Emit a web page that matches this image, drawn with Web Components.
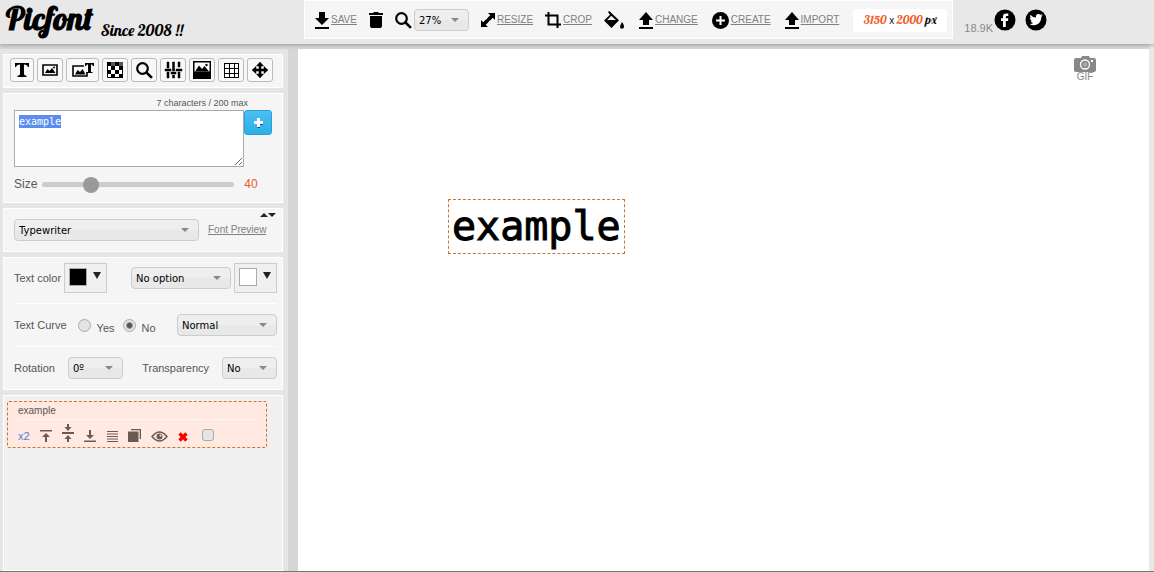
<!DOCTYPE html>
<html lang="en">
<head>
<meta charset="utf-8">
<title>Picfont</title>
<style>
  :root {
    --font-ui: "Liberation Sans", Arial, sans-serif;
    --font-control: "DejaVu Sans", Verdana, sans-serif;
    --font-mono: "DejaVu Sans Mono", monospace;
    --font-script: Lobster, "Liberation Serif", serif;
    --color-text: #555;
    --color-link: #808080;
    --color-accent: #ee5a24;
    --color-dash: #cf7430;
  }

  body {
    margin: 0;
    font: 11px/16px var(--font-ui);
    color: var(--color-text);
  }
</style>
</head>
<body>
<picfont-app></picfont-app>

<script>
const arrowUp = '<path d="M7 0l7 8H10v5H4V8H0z"/><path d="M0 15h14v2H0z"/>';

// [width, height, markup]
const ICONS = {
  save: [14, 17, '<path d="M4 0h6v6h4L7 13 0 6h4z"/><path d="M0 15h14v2H0z"/>'],
  upload: [14, 17, arrowUp],
  trash: [14, 16, '<path d="M0 1h4l1-1h4l1 1h4v2H0zM1 4h12v10q0 2-2 2H3q-2 0-2-2z"/>'],
  search: [16, 16, '<circle cx="6.5" cy="6.5" r="5.3" fill="none" stroke="currentColor" stroke-width="2.2"/><path d="M10 11l1-1 5 5-1 1z" stroke="currentColor" stroke-width="1.2"/>'],
  resize: [14, 14, '<path d="M7 0h7v7l-2.3-2.3L9 7.5 6.5 5l2.800-2.700zM7 14H0V7l2.300 2.300L5 6.500 7.500 9 4.700 11.700z"/><path d="M3.500 8.200L8.200 3.500 10.500 5.800 5.800 10.500z"/>'],
  crop: [16, 16, '<path d="M3.500 0v12.500H16M0 3.500h12.500V16" fill="none" stroke="currentColor" stroke-width="2"/>'],
  bucket: [20, 18, '<path d="M4 1l1.300-1L15 9.300 7.500 17 0 9.500l6-5.700z"/><path d="M7 5.200L3.200 9h8.600L7.500 5z" fill="#f5f5f5"/><path d="M18 11q2.400 3.500 2 4.800a2 2 0 0 1-4 0Q16 14.500 18 11z"/>'],
  create: [17, 17, '<circle cx="8.500" cy="8.500" r="8.500"/><path d="M8.500 4v9M4 8.500h9" stroke="#fff" stroke-width="2"/>'],
  facebook: [22, 22, '<circle cx="11" cy="11" r="10.500"/><path d="M9 18v-6H7V9.300h2V7.500Q9 4.500 12 4.500h2.300v2.600h-1.500q-1 0-1 1v1.200h2.500L14 12h-2.200v6z" fill="#fff"/>'],
  twitter: [22, 22, '<circle cx="11" cy="11" r="10.500"/><path d="M4.500 15q2.400.1 3.800-1.100-2-.2-2.600-2h1.200Q4.900 11.200 4.900 9l1.200.3Q4.300 7.700 5.400 5.700q2.200 2.700 5.500 2.900-.5-2.700 1.700-3.500 1.700-.4 2.800.7l1.900-.7-1.100 1.600 1.600-.4-1.500 1.600q.1 4.500-3.500 7.100-4.200 2.500-8.300 0z" fill="#fff"/>'],
  type: [14, 14, '<path d="M0 0h14v4h-1Q12.500 1.500 9 1.500V11q0 1.700 2.500 1.700V14h-9v-1.300Q5 12.700 5 11V1.500Q1.500 1.500 1 4H0z"/>'],
  picture: [16, 12, '<path d="M1 1h14v10H1z" fill="none" stroke="currentColor" stroke-width="1.600"/><path d="M3 9l2.500-4 2 2L10 4l3.500 5z"/><circle cx="12" cy="3.500" r="1"/>'],
  pictureType: [22, 14, '<path d="M12 3H1v10h14V9" fill="none" stroke="currentColor" stroke-width="1.600"/><path d="M3 11.500L5.500 7 8 9l2.500-3 3 5.500zM13 0h9v3h-1l-1-1.500h-1V9h1.500v1h-6V9H16V1.500h-1L14 3h-1z"/>'],
  checker: [16, 16, '<path d="M.5.5h15v15H.5z" fill="#fff" stroke="currentColor"/><path d="M0 0h4v4H0zM8 0h4v4H8zM4 4h4v4H4zM12 4h4v4h-4zM0 8h4v4H0zM8 8h4v4H8zM4 12h4v4H4zM12 12h4v4h-4z"/><path d="M4 0h4v4H4zM12 0h4v4h-4z" fill="#555"/>'],
  sliders: [17, 16, '<path d="M2 0h2v6H2zM2 10h2v6H2zM0 7h6v2H0zM7.500 0h2v9h-2zM7.500 13h2v3h-2zM6 10h5v2H6zM13 0h2v5h-2zM13 10h2v6h-2zM11 7h6v2h-6z" stroke="currentColor" stroke-width=".5"/>'],
  fill: [18, 18, '<path d="M0 0h18v18H0z"/><path d="M1.500 1.500h15v9h-15z" fill="#fff"/><path d="M2 10.500L6 4.500 9 8l2.500-3 4.500 5.500z"/><circle cx="13.500" cy="4" r="1.200"/>'],
  grid: [15, 15, '<path d="M0 0h4v4H0zM5.500 0h4v4h-4zM11 0h4v4h-4zM0 5.500h4v4H0zM5.500 5.500h4v4h-4zM11 5.500h4v4h-4zM0 11h4v4H0zM5.500 11h4v4h-4zM11 11h4v4h-4z" fill="#fff"/><path d="M.5 0v15M5.500 0v15M10.500 0v15M14.500 0v15M0 .5h15M0 5.500h15M0 10.500h15M0 14.500h15" stroke="currentColor"/>'],
  move: [16, 16, '<path d="M8 0l3.500 4H9v3h3V4.500L16 8l-4 3.500V9H9v3h2.500L8 16l-3.500-4H7V9H4v2.500L0 8l4-3.500V7h3V4H4.500z" stroke="currentColor" stroke-width=".5"/>'],
  caret: [8, 4, '<path d="M0 0h8L4 4z" fill="#888"/>'],
  caretDark: [8, 7, '<path d="M0 0h8L4 7z" fill="#222"/>'],
  sort: [16, 4, '<path d="M0 4l4-4 4 4zM8 0h8l-4 4z" fill="#222"/>'],
  plus: [9, 9, '<path d="M3 0h3v3h3v3H6v3H3V6H0V3h3z" fill="#fff"/><path d="M6 6.400h3M3.500 9.500H6" stroke="#226" stroke-width=".8"/>'],
  camera: [22, 16, '<path d="M2 2h5l1-2h7l1 2h4q2 0 2 2v10q0 2-2 2H2q-2 0-2-2V4q0-2 2-2z"/><circle cx="11" cy="8.500" r="4.500" fill="none" stroke="#fff" stroke-width="1.300"/><circle cx="11" cy="8.500" r="2.300" fill="#aaa"/><path d="M17 4h2v2h-2z" fill="#fff"/>'],
  toTop: [12, 12, '<path d="M0 0h12v1.500H0zM6 3l4 4H7v5H5V7H2z"/>'],
  toMiddle: [12, 18, '<path d="M5 0h2v3h2.500L6 7 2.500 3H5zM0 8h12v2H0zM6 11l3.500 4H7v3H5v-3H2.500z"/>'],
  toBottom: [12, 12, '<path d="M5 0h2v5h3L6 9 2 5h3zM0 10.500h12V12H0z"/>'],
  lines: [12, 11, '<path d="M1 .5h11M1 3h11M1 5.500h11M1 8h11M1 10.500h11" stroke="currentColor" stroke-width="1"/>'],
  copies: [13, 13, '<path d="M3 0h10v10h-1.300V1.300H3zM0 2.500h10.500V13H0z"/>'],
  eye: [17, 11, '<path d="M1 5.500Q8.500-3.500 16 5.500 8.500 14.500 1 5.500z" fill="none" stroke="currentColor" stroke-width="1.500"/><circle cx="8.500" cy="5.500" r="3"/><circle cx="9.500" cy="4.500" r="1" fill="#ffe9e0"/>'],
  remove: [10, 10, '<path d="M1.500 1.500l7 7M8.500 1.500l-7 7" stroke="#f00" stroke-width="3.200"/>']
};

/** <ui-icon name> - inline drawing taken from ICONS */
class UiIcon extends HTMLElement {
  connectedCallback() {
    const [w, h, markup] = ICONS[this.getAttribute('name')];
    this.attachShadow({ mode: 'open' }).innerHTML = `
      <style>
        :host { display: block; flex: none; }
        svg { display: block; overflow: visible; }
      </style>
      <svg width="${w}" height="${h}" viewBox="0 0 ${w} ${h}" fill="currentColor" aria-hidden="true">${markup}</svg>
    `;
  }
}

/** <ui-select value label> - drop-down; its width comes from the host */
class UiSelect extends HTMLElement {
  connectedCallback() {
    this.attachShadow({ mode: 'open' }).innerHTML = `
      <style>
        :host { display: grid; flex: none; align-items: center; color: #000; }
        select, ui-icon { grid-area: 1 / 1; }
        select {
          appearance: none;
          width: 100%;
          height: 22px;
          margin: 0;
          padding: 1px 16px 0 4px;
          border: 1px solid #ccc;
          border-radius: 4px;
          background: linear-gradient(#eee 50%, #e8e8e8 50%);
          font: 10px/16px var(--font-control);
          color: inherit;
        }
        ui-icon { justify-self: end; margin-right: 10px; pointer-events: none; }
      </style>
      <select aria-label="${this.getAttribute('label')}">
        <option>${this.getAttribute('value')}</option>
      </select>
      <ui-icon name="caret"></ui-icon>
    `;
  }
}

/** <ui-panel> - light box with a white edge */
class UiPanel extends HTMLElement {
  connectedCallback() {
    this.attachShadow({ mode: 'open' }).innerHTML = `
      <style>
        :host {
          display: block;
          box-sizing: border-box;
          border: 1px solid #fff;
          background: #f5f5f5;
        }
      </style>
      <slot></slot>
    `;
  }
}

/** <tool-link icon> - icon followed by an underlined caption */
class ToolLink extends HTMLElement {
  connectedCallback() {
    this.attachShadow({ mode: 'open' }).innerHTML = `
      <style>
        :host { display: block; flex: none; }
        a {
          display: flex;
          align-items: center;
          gap: 2px;
          color: var(--color-link);
          font-size: 10px;
          line-height: 16px;
        }
        ui-icon { color: #000; }
      </style>
      <a href="#"><ui-icon name="${this.getAttribute('icon')}"></ui-icon><slot></slot></a>
    `;
  }
}

/** <color-picker color label> */
class ColorPicker extends HTMLElement {
  connectedCallback() {
    this.attachShadow({ mode: 'open' }).innerHTML = `
      <style>
        :host { display: block; flex: none; }
        button {
          display: flex;
          gap: 6px;
          box-sizing: border-box;
          width: 43px;
          height: 30px;
          padding: 4px;
          border: 1px solid #ccc;
          background: #f0f0f0;
        }
        i {
          box-sizing: border-box;
          width: 18px;
          height: 18px;
          border: 1px solid #aaa;
          background: ${this.getAttribute('color')};
        }
        ui-icon { margin-top: 4px; }
      </style>
      <button aria-label="${this.getAttribute('label')}"><i></i><ui-icon name="caretDark"></ui-icon></button>
    `;
  }
}

class AppHeader extends HTMLElement {
  connectedCallback() {
    this.attachShadow({ mode: 'open' }).innerHTML = `
      <style>
        :host {
          display: grid;
          grid-template-columns: 304px auto 1fr;
          align-items: start;
          height: 44px;
          background: #e8e8e8;
          box-shadow: 0 1px 4px #999;
          position: relative;
        }
        .brand {
          display: flex;
          gap: 8px;
          align-items: flex-start;
          padding-left: 6px;
          color: #000;
          font-family: var(--font-script);
        }
        h1 { margin: 0; font-size: 32px; line-height: 36px; }
        .brand p { margin: 20px 0 0; font-size: 16px; line-height: 20px; }
        nav, .group { display: flex; align-items: center; gap: 12px; }
        nav { gap: 15px; height: 22px; padding: 8px 5px 7px 10px; }
        .group.wide { gap: 14px; }
        .zoom { display: flex; align-items: center; gap: 3px; color: #000; }
        button { padding: 0; border: 0; background: none; color: #000; }
        .zoom ui-select { width: 55px; }
        .size {
          box-sizing: border-box;
          width: 94px;
          background: #fff;
          color: #111;
          text-align: center;
          font: 12px/22px var(--font-script);
        }
        .size b { color: var(--color-accent); font-weight: normal; }
        .size span { font: 10px/22px var(--font-ui); }
        .social { display: flex; gap: 9px; padding: 9px 0 0 11px; }
        .social a { color: #000; }
        .likes { display: flex; gap: 1px; color: #888; }
        .likes span { padding-top: 11px; }
      </style>
      <div class="brand"><h1>Picfont</h1><p>Since 2008 !!</p></div>
      <ui-panel>
        <nav>
          <div class="group">
            <tool-link icon="save">SAVE</tool-link>
            <button aria-label="Delete"><ui-icon name="trash"></ui-icon></button>
            <div class="zoom">
              <ui-icon name="search"></ui-icon>
              <ui-select label="Zoom" value="27%"></ui-select>
            </div>
            <tool-link icon="resize">RESIZE</tool-link>
            <tool-link icon="crop">CROP</tool-link>
            <button aria-label="Fill"><ui-icon name="bucket"></ui-icon></button>
          </div>
          <div class="group wide">
            <tool-link icon="upload">CHANGE</tool-link>
            <tool-link icon="create">CREATE</tool-link>
            <tool-link icon="upload">IMPORT</tool-link>
            <div class="size"><b>3150</b> <span>x</span> <b>2000</b> px</div>
          </div>
        </nav>
      </ui-panel>
      <div class="social">
        <div class="likes"><span>18.9K</span><a href="#" aria-label="Facebook"><ui-icon name="facebook"></ui-icon></a></div>
        <a href="#" aria-label="Twitter"><ui-icon name="twitter"></ui-icon></a>
      </div>
    `;
  }
}

/** <mode-bar> - row of square tool buttons */
class ModeBar extends HTMLElement {
  connectedCallback() {
    const modes = ['type', 'picture', 'pictureType', 'checker', 'search', 'sliders', 'fill', 'grid', 'move'];
    this.attachShadow({ mode: 'open' }).innerHTML = `
      <style>
        :host { display: flex; gap: 3px; padding: 3px 6px 5px; }
        button {
          display: grid;
          place-items: center;
          box-sizing: border-box;
          flex: 0 0 26px;
          height: 24px;
          padding: 0;
          border: 1px solid #bbb;
          border-radius: 3px;
          background: #f8f8f8;
          color: #000;
        }
        button:first-of-type { flex-basis: 24px; }
        button:nth-of-type(3) { flex-basis: 33px; }
      </style>
      ${modes.map(m => `<button aria-label="${m}"><ui-icon name="${m}"></ui-icon></button>`).join('')}
    `;
  }
}

class TextEditor extends HTMLElement {
  connectedCallback() {
    this.attachShadow({ mode: 'open' }).innerHTML = `
      <style>
        :host {
          display: grid;
          grid-template-columns: 230px 28px;
          padding: 2px 10px 10px;
        }
        .count {
          grid-column: 1 / 3;
          padding-right: 24px;
          text-align: right;
          font-size: 9px;
          line-height: 14px;
        }
        textarea {
          box-sizing: border-box;
          height: 57px;
          margin: 0;
          padding: 4px;
          border: 1px solid #aaa;
          outline: 0;
          background: #fff;
          color: #222;
          font: 10px/13px var(--font-mono);
        }
        textarea::selection { background: #5b8def; color: #fff; }
        button {
          display: grid;
          place-items: center;
          width: 28px;
          height: 25px;
          padding: 0;
          border: 1px solid #2a9fd6;
          border-radius: 3px;
          background: linear-gradient(#4ac0f2, #2bb0e8);
        }
        .size {
          grid-column: 1 / 3;
          display: flex;
          align-items: center;
          gap: 5px;
          padding-top: 9px;
          font-size: 12px;
          line-height: 16px;
        }
        input {
          appearance: none;
          width: 192px;
          height: 16px;
          margin: 0;
          background: none;
        }
        input::-webkit-slider-runnable-track {
          height: 5px;
          border-radius: 3px;
          background: #ccc;
        }
        input::-webkit-slider-thumb {
          appearance: none;
          width: 16px;
          height: 16px;
          margin-top: -5px;
          border-radius: 50%;
          background: #999;
        }
        output { margin-left: 5px; color: var(--color-accent); }
      </style>
      <label class="count" for="text">7 characters / 200 max</label>
      <textarea id="text" maxlength="200" spellcheck="false">example</textarea>
      <button aria-label="Add text"><ui-icon name="plus"></ui-icon></button>
      <div class="size">
        <label for="size">Size</label>
        <input id="size" type="range" min="10" max="140" value="40">
        <output for="size">40</output>
      </div>
    `;
    const area = this.shadowRoot.querySelector('textarea');
    area.focus();
    area.select();
  }
}

class FontPicker extends HTMLElement {
  connectedCallback() {
    this.attachShadow({ mode: 'open' }).innerHTML = `
      <style>
        :host {
          display: grid;
          grid-template-columns: 185px 1fr;
          gap: 2px 9px;
          align-items: center;
          padding: 4px 6px 10px 10px;
        }
        ui-icon { grid-column: 1 / 3; justify-self: end; }
        a { color: var(--color-link); font-size: 10px; }
      </style>
      <ui-icon name="sort"></ui-icon>
      <ui-select label="Font" value="Typewriter"></ui-select>
      <a href="#">Font Preview</a>
    `;
  }
}

class TextOptions extends HTMLElement {
  connectedCallback() {
    this.attachShadow({ mode: 'open' }).innerHTML = `
      <style>
        :host { display: block; padding: 0 5px 0 10px; }
        .row {
          display: flex;
          align-items: center;
          height: 42px;
        }
        .row + .row { border-top: 1px solid #fff; }
        .row.colors { height: 30px; padding: 5px 0 10px; gap: 3px; }
        .push { margin-left: auto; }
        .wide { width: 100px; }
        .narrow { width: 55px; }
        .rotation { gap: 13px; }
        fieldset {
          display: flex;
          align-items: center;
          margin: 0 0 0 11px;
          padding: 0;
          border: 0;
          gap: 8px;
        }
        fieldset label { display: flex; align-items: center; gap: 6px; }
        fieldset span { padding-top: 6px; }
        input {
          appearance: none;
          box-sizing: border-box;
          width: 13px;
          height: 13px;
          margin: 0;
          border: 1px solid #aaa;
          border-radius: 50%;
          background: #e4e4e4;
        }
        input:checked { background: radial-gradient(#555 2px, #e4e4e4 4px); }
      </style>
      <div class="row colors">
        <span>Text color</span>
        <color-picker color="#000" label="Text color"></color-picker>
        <ui-select class="wide push" label="Effect" value="No option"></ui-select>
        <color-picker color="#fff" label="Effect color"></color-picker>
      </div>
      <div class="row">
        <span>Text Curve</span>
        <fieldset aria-label="Text Curve">
          <label><input type="radio" name="curve"><span>Yes</span></label>
          <label><input type="radio" name="curve" checked><span>No</span></label>
        </fieldset>
        <ui-select class="wide push" label="Style" value="Normal"></ui-select>
      </div>
      <div class="row rotation">
        <span>Rotation</span>
        <ui-select class="narrow" label="Rotation" value="0º"></ui-select>
        <span class="push">Transparency</span>
        <ui-select class="narrow" label="Transparency" value="No"></ui-select>
      </div>
    `;
  }
}

/** <layer-item name> - one entry of the layer list */
class LayerItem extends HTMLElement {
  connectedCallback() {
    const name = this.getAttribute('name');
    const actions = ['toTop', 'toMiddle', 'toBottom', 'lines', 'copies', 'eye', 'remove'];
    this.attachShadow({ mode: 'open' }).innerHTML = `
      <style>
        :host {
          display: block;
          box-sizing: border-box;
          width: 260px;
          padding: 1px 10px 5px;
          border: 1px dashed var(--color-dash);
          border-radius: 2px;
          background: #ffe9e0;
        }
        .name {
          display: block;
          border-bottom: 1px solid #fff5f0;
          font-size: 10px;
          line-height: 16px;
        }
        .actions {
          display: flex;
          align-items: flex-end;
          gap: 10px;
          height: 22px;
        }
        a { color: #4a80e0; line-height: 12px; text-decoration: none; }
        button { padding: 0; border: 0; background: none; color: #6b5a52; }
        input {
          appearance: none;
          box-sizing: border-box;
          width: 12px;
          height: 12px;
          margin: 0 0 1px 4px;
          border: 1px solid #aaa;
          border-radius: 3px;
          background: #e4e4e4;
        }
      </style>
      <label class="name" for="pick">${name}</label>
      <div class="actions">
        <a href="#">x2</a>
        ${actions.map(a => `<button aria-label="${a}"><ui-icon name="${a}"></ui-icon></button>`).join('')}
        <input id="pick" type="checkbox">
      </div>
    `;
  }
}

class WorkArea extends HTMLElement {
  connectedCallback() {
    this.attachShadow({ mode: 'open' }).innerHTML = `
      <style>
        :host { display: block; position: relative; background: #fff; }
        .text {
          position: absolute;
          left: 150px;
          top: 150px;
          padding: 0 3px;
          border: 1px dashed var(--color-dash);
          color: #000;
          font: 40px/53px var(--font-mono);
          -webkit-text-stroke: 1px #000;
        }
        button {
          position: absolute;
          right: 53px;
          top: 7px;
          display: grid;
          justify-items: center;
          padding: 0;
          border: 0;
          background: none;
          color: #888;
          font: 10px/10px var(--font-ui);
        }
      </style>
      <div class="text">example</div>
      <button><ui-icon name="camera"></ui-icon>GIF</button>
    `;
  }
}

class PicfontApp extends HTMLElement {
  connectedCallback() {
    this.attachShadow({ mode: 'open' }).innerHTML = `
      <style>
        :host {
          display: grid;
          grid-template-rows: auto 1fr;
          box-sizing: border-box;
          min-height: 100vh;
          border-bottom: 1px solid #777;
          background: #d6d6d6;
        }
        main {
          display: grid;
          grid-template-columns: 288px 1fr;
          gap: 10px;
          padding: 5px 0 0;
          border-right: 5px solid #e8e8e8;
        }
        aside {
          display: flex;
          flex-direction: column;
          gap: 5px;
          box-sizing: border-box;
          padding: 5px 5px 0 3px;
          background: #e5e5e5;
        }
        .layers { flex: 1; padding: 5px 3px; background: #f0f0f0; }
      </style>
      <app-header></app-header>
      <main>
        <aside>
          <ui-panel><mode-bar></mode-bar></ui-panel>
          <ui-panel><text-editor></text-editor></ui-panel>
          <ui-panel><font-picker></font-picker></ui-panel>
          <ui-panel><text-options></text-options></ui-panel>
          <ui-panel class="layers"><layer-item name="example"></layer-item></ui-panel>
        </aside>
        <work-area></work-area>
      </main>
    `;
  }
}

customElements.define('ui-icon', UiIcon);
customElements.define('ui-select', UiSelect);
customElements.define('ui-panel', UiPanel);
customElements.define('tool-link', ToolLink);
customElements.define('color-picker', ColorPicker);
customElements.define('app-header', AppHeader);
customElements.define('mode-bar', ModeBar);
customElements.define('text-editor', TextEditor);
customElements.define('font-picker', FontPicker);
customElements.define('text-options', TextOptions);
customElements.define('layer-item', LayerItem);
customElements.define('work-area', WorkArea);
customElements.define('picfont-app', PicfontApp);
</script>
</body>
</html>
